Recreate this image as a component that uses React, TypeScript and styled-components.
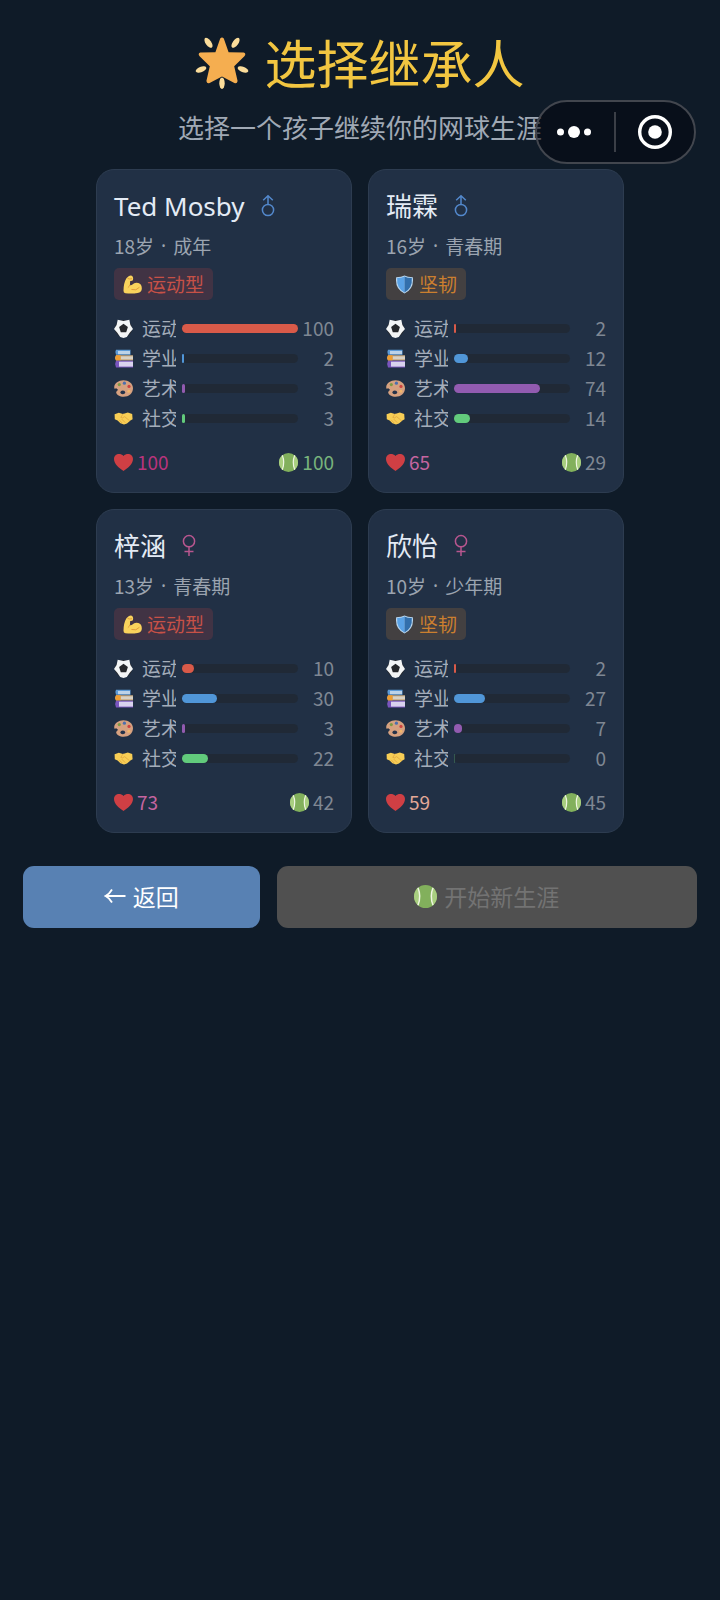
import React, { useState } from 'react';
import styled, { createGlobalStyle } from 'styled-components';

type StatKey = 'sport' | 'study' | 'art' | 'social';
type TraitKey = 'athletic' | 'tenacious';

interface Child {
  name: string;
  gender: 'male' | 'female';
  age: number;
  stage: string;
  trait: TraitKey;
  stats: Record<StatKey, number>;
  bond: number;
  bondColor: string;
  tennis: number;
}

const children: Child[] = [
  {
    name: 'Ted Mosby', gender: 'male', age: 18, stage: '成年', trait: 'athletic',
    stats: { sport: 100, study: 2, art: 3, social: 3 }, bond: 100, bondColor: '#b8347c', tennis: 100,
  },
  {
    name: '瑞霖', gender: 'male', age: 16, stage: '青春期', trait: 'tenacious',
    stats: { sport: 2, study: 12, art: 74, social: 14 }, bond: 65, bondColor: '#c565a0', tennis: 29,
  },
  {
    name: '梓涵', gender: 'female', age: 13, stage: '青春期', trait: 'athletic',
    stats: { sport: 10, study: 30, art: 3, social: 22 }, bond: 73, bondColor: '#c565a0', tennis: 42,
  },
  {
    name: '欣怡', gender: 'female', age: 10, stage: '少年期', trait: 'tenacious',
    stats: { sport: 2, study: 27, art: 7, social: 0 }, bond: 59, bondColor: '#e3a898', tennis: 45,
  },
];

const GlobalStyle = createGlobalStyle`
  *, *::before, *::after { box-sizing: border-box; }
  body {
    margin: 0;
    background: #0f1b28;
    color: #e4ebf5;
    font-family: "Noto Sans CJK SC", "Noto Sans", sans-serif;
    font-weight: 400;
  }
  button { font: inherit; color: inherit; }
`;

const Page = styled.main`
  position: relative;
  min-height: 100vh;
  padding: 24px 23px;
  display: flex;
  flex-direction: column;
`;

const Title = styled.h1`
  margin: 0;
  display: flex;
  align-items: center;
  justify-content: center;
  gap: 15px;
  font-size: 52px;
  line-height: 76px;
  font-weight: 400;
  color: #f2c641;
`;

const Subtitle = styled.p`
  margin: 9px 0 24px;
  text-align: center;
  font-size: 26px;
  line-height: 36px;
  color: #a0a9b5;
`;

const Cards = styled.section`
  width: 100%;
  max-width: 528px;
  margin: 0 auto;
  display: grid;
  grid-template-columns: repeat(2, minmax(0, 1fr));
  gap: 16px;
`;

const Card = styled.button<{ $selected: boolean }>`
  display: flex;
  flex-direction: column;
  align-items: stretch;
  padding: 17px 17px 17px;
  border: 1px solid ${(p) => (p.$selected ? '#f2c641' : '#2d3c50')};
  border-radius: 18px;
  background: #213045;
  text-align: left;
  font-size: 19px;
  line-height: 26px;
  cursor: pointer;
`;

const NameRow = styled.span`
  display: flex;
  align-items: center;
  gap: 15px;
  font-family: "Noto Sans", "Noto Sans CJK SC", sans-serif;
  font-size: 26px;
  line-height: 38px;
`;

const Meta = styled.span`
  margin-top: 8px;
  display: flex;
  gap: 7px;
  color: #9ba4b0;
`;

const Dot = styled.span`
  font-family: "Noto Sans", sans-serif;
`;

const Tag = styled.span<{ $trait: TraitKey }>`
  margin-top: 9px;
  align-self: flex-start;
  display: flex;
  align-items: center;
  gap: 5px;
  padding: 0 9px;
  line-height: 32px;
  border-radius: 5px;
  background: ${(p) => (p.$trait === 'athletic' ? '#413344' : '#434041')};
  color: ${(p) => (p.$trait === 'athletic' ? '#c65147' : '#cb7f2f')};
`;

const Stats = styled.span`
  margin-top: 15px;
  display: flex;
  flex-direction: column;
  gap: 4px;
`;

const StatRow = styled.span`
  display: grid;
  grid-template-columns: 62px minmax(0, 1fr) 36px;
  align-items: center;
`;

const StatLabel = styled.span`
  display: flex;
  align-items: center;
  gap: 9px;
  overflow: hidden;
  white-space: nowrap;
  color: #a4adba;
`;

const Track = styled.span`
  display: block;
  margin-left: 6px;
  height: 9px;
  border-radius: 5px;
  background: #202936;
`;

const Fill = styled.span<{ $color: string }>`
  display: block;
  height: 100%;
  border-radius: 5px;
  background: ${(p) => p.$color};
`;

const EmptyFill = styled.span`
  display: block;
  width: 1px;
  height: 100%;
  background: #35594f;
`;

const StatValue = styled.span`
  text-align: right;
  color: #7f8793;
`;

const CardFooter = styled.span`
  margin-top: 18px;
  display: flex;
  justify-content: space-between;
`;

const Score = styled.span<{ $color: string }>`
  display: flex;
  align-items: center;
  gap: 4px;
  color: ${(p) => p.$color};
`;

const Actions = styled.div`
  margin-top: 33px;
  display: grid;
  grid-template-columns: 9fr 16fr;
  gap: 17px;
`;

const ActionButton = styled.button<{ $tone: 'blue' | 'muted' }>`
  display: flex;
  align-items: center;
  justify-content: center;
  gap: 7px;
  padding: 13px 14px 15px;
  border: 0;
  border-radius: 11px;
  font-size: 23px;
  line-height: 34px;
  background: ${(p) => (p.$tone === 'blue' ? '#5881b3' : '#505050')};
  color: ${(p) => (p.$tone === 'blue' ? '#ffffff' : '#737373')};
  cursor: ${(p) => (p.$tone === 'blue' ? 'pointer' : 'not-allowed')};
`;

const Capsule = styled.nav`
  position: absolute;
  top: 100px;
  right: 24px;
  width: 161px;
  height: 64px;
  display: grid;
  grid-template-columns: 73px 1fr;
  column-gap: 4px;
  align-items: center;
  border: 2px solid #42464e;
  border-radius: 32px;
  background: rgba(4, 6, 14, 0.55);
`;

const CapsuleButton = styled.button`
  height: 40px;
  padding: 0;
  display: flex;
  align-items: center;
  justify-content: center;
  border: 0;
  background: none;
  cursor: pointer;

  & + & { border-left: 2px solid #3b3f47; }
`;

const Svg = styled.svg`
  flex: none;
  display: block;
`;

const GlowingStar = () => (
  <Svg width="54" height="54" viewBox="0 -2 54 54" aria-hidden="true">
    <path d="M28.800 1.600 33.600 15.200 48.600 15.600Q51.600 16.600 49.400 19.200L39.200 29.200 42.600 44Q42.200 46.800 39.400 46L27 39.600 14.600 46Q11.800 46.800 11.400 44L14.800 29.200 4.600 19.200Q2.400 16.600 5.400 15.600L20.400 15.200 25.200 1.600Q27-.6 28.800 1.600Z" fill="#f5ae50" />
    <g fill="#fbdd9b">
      <ellipse cx="13.500" cy="5.800" rx="2.800" ry="5.800" transform="rotate(-36 13.500 5.800)" />
      <ellipse cx="40.500" cy="5.800" rx="2.800" ry="5.800" transform="rotate(36 40.500 5.800)" />
      <ellipse cx="6" cy="32.500" rx="2.700" ry="5.600" transform="rotate(68 6 32.500)" />
      <ellipse cx="48" cy="32.500" rx="2.700" ry="5.600" transform="rotate(-68 48 32.500)" />
      <ellipse cx="27" cy="46.200" rx="2.700" ry="5.800" />
    </g>
  </Svg>
);

const Male = () => (
  <Svg width="16" height="24" viewBox="0 0 16 24" fill="none" stroke="#5388cc" strokeWidth="1.500" role="img" aria-label="男">
    <circle cx="8" cy="16" r="5.600" />
    <path d="M8 10.400V2M3.200 6.200 8 1.700l4.800 4.500" />
  </Svg>
);

const Female = () => (
  <Svg width="16" height="24" viewBox="0 0 16 24" fill="none" stroke="#b8568f" strokeWidth="1.500" role="img" aria-label="女">
    <circle cx="8" cy="7.200" r="5.600" />
    <path d="M8 12.800V22M3.500 17.600h9" />
  </Svg>
);

const SoccerBall = () => (
  <Svg width="19" height="19" viewBox="0 0 19 19" aria-hidden="true">
    <circle cx="9.500" cy="9.500" r="8.600" fill="#26282c" />
    <path d="M3.700.8 9.500 2 15.300.8 16.400 6 19 9.900 15.900 13.600 12.800 18 9.500 19 6.200 18 3.100 13.600 0 9.900 2.600 6Z" fill="#f3f5f6" />
    <path d="m9.500 4.800 4.400 3.300-1.700 5.200H6.800L5.100 8.100Z" fill="#25272b" />
  </Svg>
);

const Books = () => (
  <Svg width="19" height="19" viewBox="0 0 19 19" aria-hidden="true">
    <path d="M2 .8h14.500v5H2Q.6 3.300 2 .8Z" fill="#5d9bd8" />
    <path d="M4 2h12v3.200H4Z" fill="#bcd2e8" />
    <path d="M2 6.200h17v5.200H2Q.2 8.800 2 6.200Z" fill="#c9ac84" />
    <path d="M2 6.200h4.500v5.200H2Q.2 8.800 2 6.200Z" fill="#ef9d32" />
    <path d="M7 7.400h12v2.800H7Z" fill="#d8d1c5" />
    <path d="M2 11.800h17v6.600H2q-1.800-3.300 0-6.600Z" fill="#7a55bd" />
    <path d="M5 12.700h14v4.900H5Z" fill="#d9d2ee" />
  </Svg>
);

const Palette = () => (
  <Svg width="19" height="19" viewBox="0 0 19 19" aria-hidden="true">
    <path d="M9.500 1.200C14.600 1.200 19 4.400 19 9.200c0 5-4.200 8.500-9.400 8.500C5.800 17.700 2.700 16 2.200 13.700c-.3-1.500 2.200-2 1.600-3.200C3.200 9.300.7 10.800.3 8.900-.4 4.600 4.400 1.200 9.500 1.200Z" fill="#d6a180" />
    <ellipse cx="8.800" cy="13.400" rx="2.400" ry="1.800" fill="#26334a" />
    <circle cx="5.300" cy="5.600" r="1.600" fill="#7e9a43" />
    <circle cx="10.400" cy="4.200" r="1.600" fill="#4c6fae" />
    <circle cx="15" cy="7.400" r="1.600" fill="#cf4440" />
    <circle cx="14.800" cy="12.200" r="1.500" fill="#f2b66b" />
  </Svg>
);

const Handshake = () => (
  <Svg width="19" height="19" viewBox="0 0 19 19" aria-hidden="true">
    <path d="M.6 5.200 4.800 3.800 9 5 13.800 3.600 18.200 5 18.600 10.200 16.400 11.400 13 14.600 10 15.400 6.400 14.200 3.600 11.400.8 10.200Z" fill="#f8ce55" />
    <path d="M9 5 6.800 8.400q1.600 1.400 3.800-.8l4.800 4M5.500 11.200l2.500 2.600M8 10.400l3 3" stroke="#dfa640" strokeWidth=".8" fill="none" strokeLinecap="round" />
  </Svg>
);

const Biceps = () => (
  <Svg width="19" height="19" viewBox="0 0 19 19" aria-hidden="true">
    <path d="M5.600 1.200Q8.300-.2 9.600 1.600q1.200 2-.2 4.200l-2.200.3-.3 4q1.400.6 2.500-.6 2.400-2.600 6-1.400 3.300 1.200 3.400 5 .2 4-4.200 4.900-5.800 1-12.200.2Q.3 18 .5 15.400.6 8 3.400 3.200Z" fill="#fad25c" />
    <path d="M5 3.600q1.600.8 3.600.2M6.800 10.200q-.6 1.600-1.600 2.200M8.800 14.600q4.400 1.600 7.400-2" stroke="#e29c3c" strokeWidth="1" fill="none" strokeLinecap="round" />
  </Svg>
);

const Shield = () => (
  <Svg width="19" height="19" viewBox="0 0 19 19" aria-hidden="true">
    <path d="M9.500.4Q12.500 2 17.800 2.200 19.400 14 9.500 18.600-.4 14 1.200 2.200 6.500 2 9.500.4Z" fill="#b9d6ee" />
    <path d="M9.500 1.500Q6.400 3 2.200 3.100 1.300 13.200 9.500 17.500Z" fill="#5aa2e6" />
    <path d="M9.500 1.500q3.100 1.500 7.300 1.600.9 10.100-7.300 14.400Z" fill="#326fac" />
  </Svg>
);

const Heart = () => (
  <Svg width="19" height="19" viewBox="0 0 19 19" aria-hidden="true">
    <path d="M9.500 3C10.700 1.600 12.400 1 14.200 1 17 1 19 3.200 19 6c0 5-5 9-9.500 12C5 15 0 11 0 6 0 3.200 2 1 4.800 1c1.800 0 3.500.6 4.700 2Z" fill="#cf3f44" />
  </Svg>
);

const TennisBall = ({ size = 19 }: { size?: number }) => (
  <Svg width={size} height={size} viewBox="0 0 19 19" aria-hidden="true">
    <circle cx="9.500" cy="9.500" r="9.500" fill="#82b05c" />
    <path d="M3.300 2.300a9.500 9.500 0 0 0 0 14.400q2.900-7.200 0-14.400ZM15.700 2.300a9.500 9.500 0 0 1 0 14.400q-2.900-7.200 0-14.400Z" fill="#a9cf80" />
    <path d="M3.300 2.300q2.900 7.200 0 14.400M15.700 2.300q-2.900 7.200 0 14.400" stroke="#eff6e2" strokeWidth="1.200" fill="none" />
  </Svg>
);

const BackArrow = () => (
  <Svg width="22" height="16" viewBox="0 0 22 16" fill="none" stroke="currentColor" strokeWidth="1.800" aria-hidden="true">
    <path d="M21.500 8H2M8 1.500Q5.500 6 1.500 8 5.500 10 8 14.500" />
  </Svg>
);

const traits: Record<TraitKey, { label: string; Icon: React.FC }> = {
  athletic: { label: '运动型', Icon: Biceps },
  tenacious: { label: '坚韧', Icon: Shield },
};

const statRows: { key: StatKey; label: string; color: string; Icon: React.FC }[] = [
  { key: 'sport', label: '运动', color: '#d95a49', Icon: SoccerBall },
  { key: 'study', label: '学业', color: '#5096d8', Icon: Books },
  { key: 'art', label: '艺术', color: '#925bb0', Icon: Palette },
  { key: 'social', label: '社交', color: '#62cb7c', Icon: Handshake },
];

function ChildCard({ child, selected, onSelect }: { child: Child; selected: boolean; onSelect: () => void }) {
  const { label, Icon } = traits[child.trait];
  return (
    <Card type="button" $selected={selected} aria-pressed={selected} onClick={onSelect}>
      <NameRow>
        <span>{child.name}</span>
        {child.gender === 'male' ? <Male /> : <Female />}
      </NameRow>
      <Meta>
        <span>{child.age}岁</span>
        <Dot>·</Dot>
        <span>{child.stage}</span>
      </Meta>
      <Tag $trait={child.trait}>
        <Icon />
        {label}
      </Tag>
      <Stats>
        {statRows.map((row) => (
          <StatRow key={row.key}>
            <StatLabel>
              <row.Icon />
              {row.label}
            </StatLabel>
            <Track>
              {child.stats[row.key] > 0 ? (
                <Fill $color={row.color} style={{ width: `${child.stats[row.key]}%` }} />
              ) : (
                <EmptyFill />
              )}
            </Track>
            <StatValue>{child.stats[row.key]}</StatValue>
          </StatRow>
        ))}
      </Stats>
      <CardFooter>
        <Score $color={child.bondColor}>
          <Heart />
          {child.bond}
        </Score>
        <Score $color={child.tennis >= 80 ? '#78b37c' : '#7f8793'}>
          <TennisBall />
          {child.tennis}
        </Score>
      </CardFooter>
    </Card>
  );
}

export default function App() {
  const [selected, setSelected] = useState<number | null>(null);
  return (
    <>
      <GlobalStyle />
      <Page>
        <Title>
          <GlowingStar />
          选择继承人
        </Title>
        <Subtitle>选择一个孩子继续你的网球生涯</Subtitle>
        <Cards>
          {children.map((child, i) => (
            <ChildCard key={child.name} child={child} selected={selected === i} onSelect={() => setSelected(i)} />
          ))}
        </Cards>
        <Actions>
          <ActionButton type="button" $tone="blue">
            <BackArrow />
            返回
          </ActionButton>
          <ActionButton type="button" $tone="muted" disabled={selected === null}>
            <TennisBall size={23} />
            开始新生涯
          </ActionButton>
        </Actions>
        <Capsule aria-label="小程序">
          <CapsuleButton type="button" aria-label="更多">
            <Svg width="36" height="16" viewBox="0 0 36 16" fill="#ffffff" aria-hidden="true">
              <circle cx="4.500" cy="8" r="3.500" />
              <circle cx="18" cy="8" r="6" />
              <circle cx="31.500" cy="8" r="3.500" />
            </Svg>
          </CapsuleButton>
          <CapsuleButton type="button" aria-label="关闭">
            <Svg width="36" height="36" viewBox="0 0 36 36" aria-hidden="true">
              <circle cx="18" cy="18" r="15.300" fill="none" stroke="#ffffff" strokeWidth="3.400" />
              <circle cx="18" cy="18" r="6.800" fill="#ffffff" />
            </Svg>
          </CapsuleButton>
        </Capsule>
      </Page>
    </>
  );
}
